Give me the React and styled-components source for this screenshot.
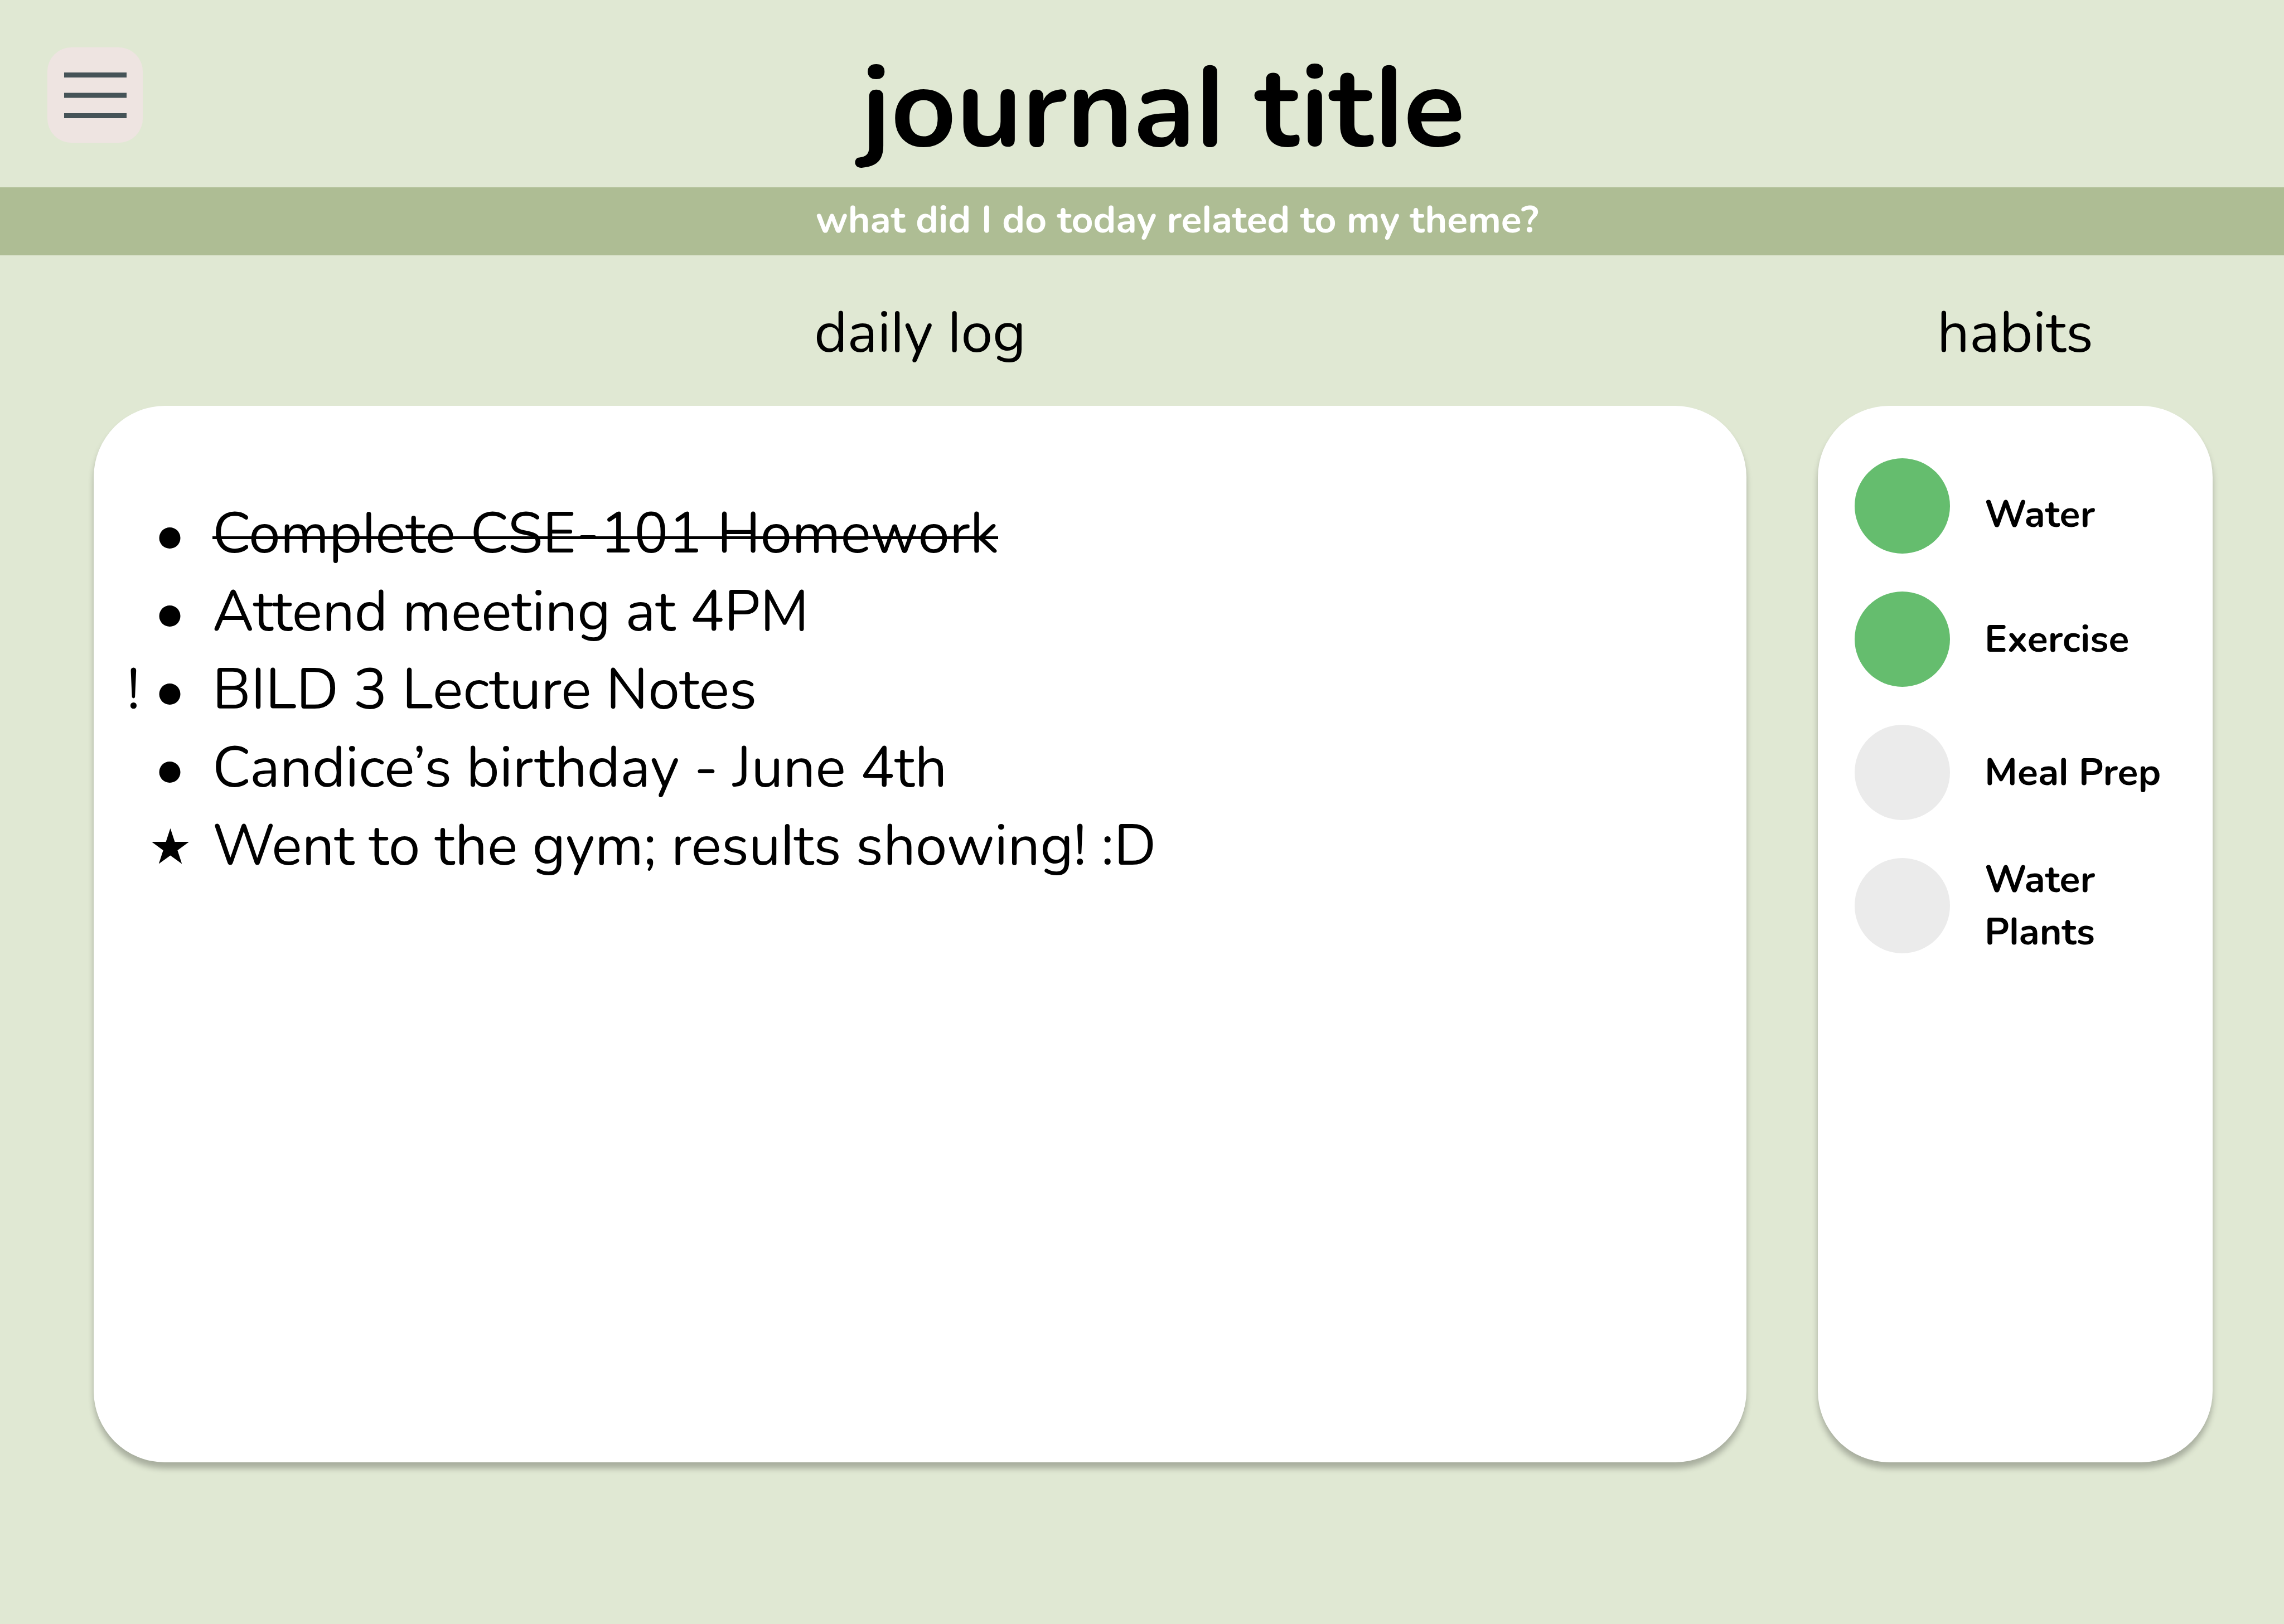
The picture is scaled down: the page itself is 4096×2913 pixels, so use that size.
import React, { useState } from "react";
import styled, { createGlobalStyle } from "styled-components";

const GlobalStyle = createGlobalStyle`
  *, *::before, *::after { box-sizing: border-box; }
  body {
    margin: 0;
    background: #e0e8d3;
    color: #000;
    font-family: Nunito, Lato, "Open Sans", sans-serif;
    /* straight lowercase l */
    font-feature-settings: "ss02" 1;
  }
`;

const Page = styled.div`
  display: flex;
  flex-direction: column;
  min-height: 100vh;
`;

const Header = styled.header`
  display: grid;
  grid-template-columns: 171px 1fr;
  align-items: start;
  padding: 57px 180px 3px 85px;
`;

const MenuButton = styled.button`
  display: grid;
  place-items: center;
  width: 171px;
  height: 171px;
  margin: 28px 0 0;
  padding: 0;
  border: 0;
  border-radius: 43px;
  background: #eee4e1;
  cursor: pointer;
`;

const Title = styled.h1`
  margin: 0;
  font-size: 204px;
  font-weight: 700;
  line-height: 276px;
  text-align: center;
`;

const Prompt = styled.p`
  margin: 0;
  padding: 12px 0 16px 126px;
  background: #aebd94;
  color: #fff;
  font-size: 68px;
  font-weight: 700;
  line-height: 94px;
  text-align: center;
`;

const Main = styled.main`
  flex: 1;
  display: grid;
  grid-template-columns: 1fr 708px;
  gap: 128px;
  padding: 70px 128px 290px 168px;
`;

const Column = styled.section`
  display: flex;
  flex-direction: column;
  gap: 60px;
`;

const Heading = styled.h2`
  margin: 0;
  font-size: 102px;
  font-weight: 400;
  line-height: 140px;
  text-align: center;
`;

const Card = styled.div`
  flex: 1;
  padding: ${(p) => p.$padding};
  border-radius: 128px;
  background: #fff;
  box-shadow: 0 11px 11px rgba(0, 0, 0, 0.25);
`;

const LogList = styled.ul`
  margin: 0;
  padding: 0;
  list-style: none;
`;

const LogRow = styled.li`
  display: grid;
  grid-template-columns: 41px 89px 1fr;
  font-size: 102px;
  line-height: 140px;
`;

const Flag = styled.span`
  text-align: center;
`;

const Marker = styled.svg`
  display: block;
  width: 89px;
  height: 140px;
`;

const Entry = styled.span`
  justify-self: start;
  margin-left: 32px;
`;

const DoneEntry = styled(Entry).attrs({ as: "s" })`
  position: relative;
  text-decoration: none;

  &::after {
    content: "";
    position: absolute;
    left: 0;
    right: 0;
    top: 74px;
    height: 5px;
    background: currentColor;
  }
`;

const HabitList = styled.ul`
  display: grid;
  grid-auto-rows: 171px;
  row-gap: 68px;
  margin: 0;
  padding: 0;
  list-style: none;
`;

const Habit = styled.li`
  display: grid;
  grid-template-columns: 171px 1fr;
  grid-template-rows: 171px;
  column-gap: 62px;
  align-items: center;

  &:first-child label {
    padding-top: 30px;
  }
`;

const HabitCheck = styled.input`
  appearance: none;
  width: 171px;
  height: 171px;
  margin: 0;
  border-radius: 50%;
  background: #ebebeb;
  cursor: pointer;

  &:checked {
    background: #65bd6e;
  }
`;

const HabitLabel = styled.label`
  font-size: 68px;
  font-weight: 700;
  line-height: 94px;
`;

const entries = [
  { text: "Complete CSE-101 Homework", done: true },
  { text: "Attend meeting at 4PM" },
  { text: "BILD 3 Lecture Notes", important: true },
  { text: "Candice’s birthday - June 4th" },
  { text: "Went to the gym; results showing! :D", star: true },
];

const initialHabits = [
  { id: "water", name: "Water", done: true },
  { id: "exercise", name: "Exercise", done: true },
  { id: "meal-prep", name: "Meal Prep", done: false },
  { id: "water-plants", name: "Water Plants", done: false },
];

const starPoints = Array.from({ length: 10 }, (_, i) => {
  const r = i % 2 ? 13.5 : 35.3;
  const a = (Math.PI / 5) * i - Math.PI / 2;
  return `${(45.5 + r * Math.cos(a)).toFixed(2)},${(73 + r * Math.sin(a)).toFixed(2)}`;
}).join(" ");

function EntryMarker({ star }) {
  return (
    <Marker viewBox="0 0 89 140" aria-hidden="true">
      {star ? <polygon points={starPoints} /> : <circle cx="44.5" cy="77" r="19" />}
    </Marker>
  );
}

export default function App() {
  const [habits, setHabits] = useState(initialHabits);
  const toggle = (id) =>
    setHabits((list) => list.map((h) => (h.id === id ? { ...h, done: !h.done } : h)));

  return (
    <Page>
      <GlobalStyle />
      <Header>
        <MenuButton type="button" aria-label="Menu">
          <svg width="112" height="82" viewBox="0 0 112 82" fill="#455357" aria-hidden="true">
            <rect y="0" width="112" height="9" />
            <rect y="36.5" width="112" height="9" />
            <rect y="73" width="112" height="9" />
          </svg>
        </MenuButton>
        <Title>journal title</Title>
      </Header>
      <Prompt>what did I do today related to my theme?</Prompt>
      <Main>
        <Column>
          <Heading>daily log</Heading>
          <Card $padding="160px 51px">
            <LogList>
              {entries.map((e) => (
                <LogRow key={e.text}>
                  <Flag>{e.important ? "!" : ""}</Flag>
                  <EntryMarker star={e.star} />
                  {e.done ? <DoneEntry>{e.text}</DoneEntry> : <Entry>{e.text}</Entry>}
                </LogRow>
              ))}
            </LogList>
          </Card>
        </Column>
        <Column>
          <Heading>habits</Heading>
          <Card $padding="94px 66px">
            <HabitList>
              {habits.map((h) => (
                <Habit key={h.id}>
                  <HabitCheck
                    type="checkbox"
                    id={h.id}
                    checked={h.done}
                    onChange={() => toggle(h.id)}
                  />
                  <HabitLabel htmlFor={h.id}>{h.name}</HabitLabel>
                </Habit>
              ))}
            </HabitList>
          </Card>
        </Column>
      </Main>
    </Page>
  );
}
